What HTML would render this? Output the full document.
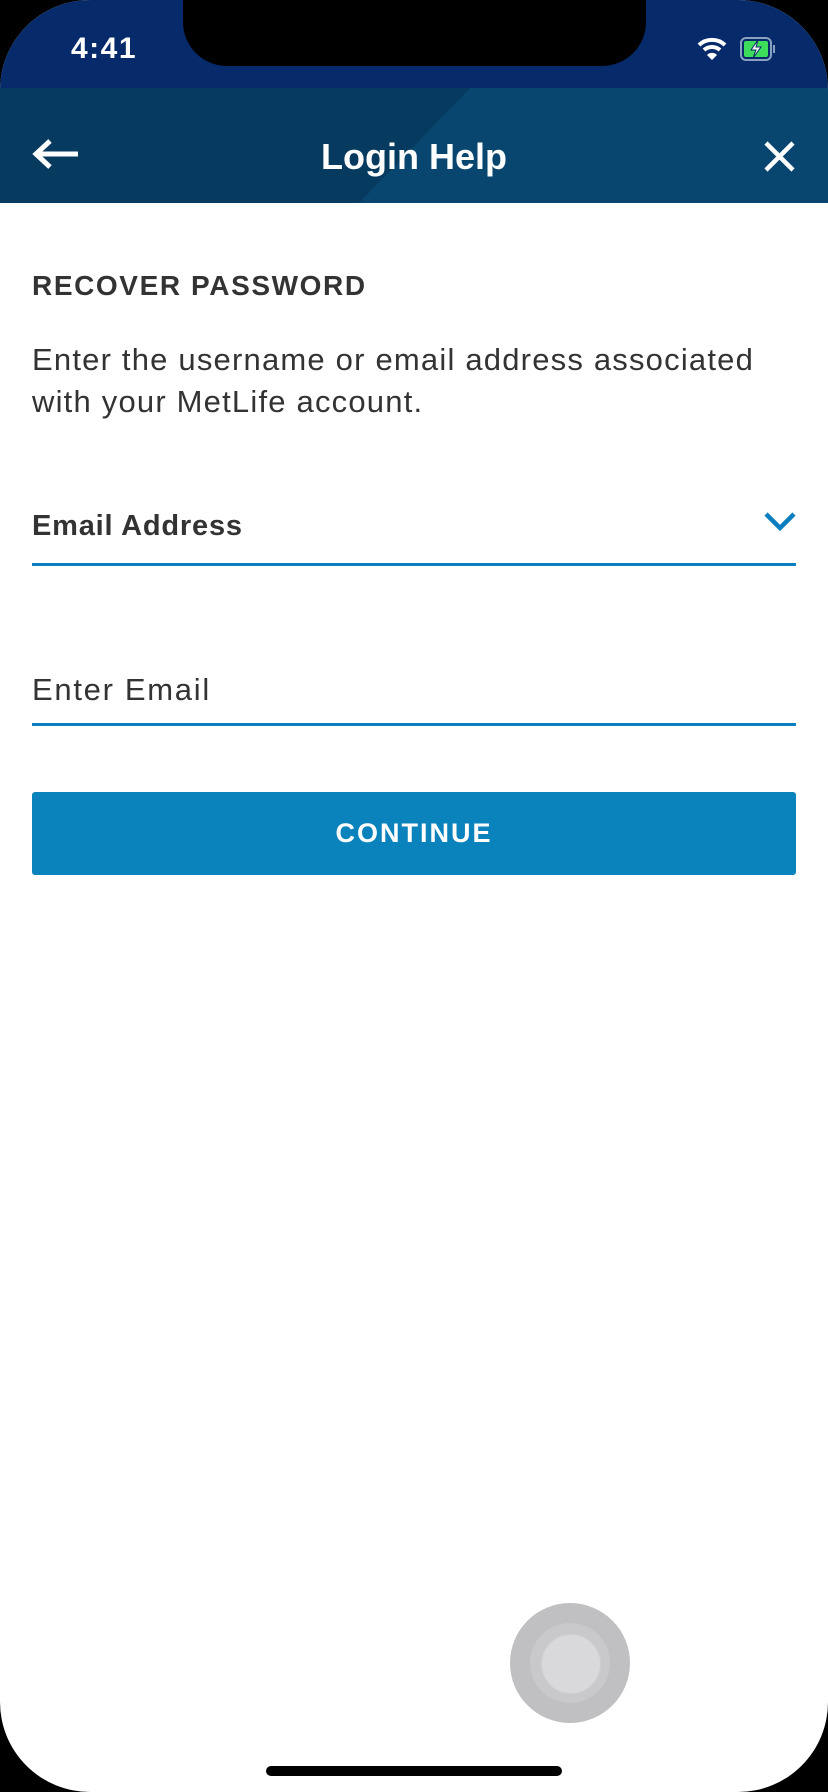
<!DOCTYPE html>
<html><head><meta charset="utf-8"><style>
html,body{margin:0;padding:0;background:#000;}
#s{position:relative;width:828px;height:1792px;background:#fff;border-radius:90px;overflow:hidden;font-family:"Liberation Sans",sans-serif;}
.sb{position:absolute;left:0;top:0;width:828px;height:88px;background:#062a6a;}
.notch{position:absolute;left:183px;top:0;width:463px;height:66px;background:#000;border-radius:0 0 44px 44px;}
.t{position:absolute;color:#fff;}
.h{position:absolute;left:32px;font-size:28px;font-weight:bold;color:#333;letter-spacing:1.6px;}
.p{position:absolute;left:32px;font-size:31px;color:#333;line-height:42px;letter-spacing:1.2px;}
.line{position:absolute;left:32px;width:764px;height:3px;background:#0b7fbf;}
</style></head><body><div id="s">
<div class="sb"></div>
<div class="notch"></div>
<div class="t" style="left:71px;top:32px;font-size:30px;font-weight:bold;letter-spacing:1.5px;">4:41</div>
<svg style="position:absolute;left:697px;top:36px" width="30" height="26" viewBox="0 0 30 26"><path d="M2 9 A19 19 0 0 1 28 9" stroke="#fff" stroke-width="4" fill="none"/><path d="M7 14 A12 12 0 0 1 23 14" stroke="#fff" stroke-width="4" fill="none"/><path d="M15 24 L10 19 A7 7 0 0 1 20 19 Z" fill="#fff"/></svg>
<svg style="position:absolute;left:740px;top:36px" width="36" height="26" viewBox="0 0 36 26"><rect x="1" y="2" width="30" height="22" rx="5" fill="none" stroke="#8aa0c0" stroke-width="2"/><rect x="4" y="5" width="24" height="16" rx="2" fill="#3ddc5a"/><rect x="33" y="9" width="2" height="8" fill="#8aa0c0"/><path d="M18 4 L11 14 L16 14 L13 22 L21 11 L16 11 Z" fill="#fff" stroke="#062a6a" stroke-width="1"/></svg>
<svg style="position:absolute;left:0;top:88px" width="828" height="115"><rect width="828" height="115" fill="#08466f"/><polygon points="0,0 470,0 359,115 0,115" fill="#063a5f"/></svg>
<svg style="position:absolute;left:32px;top:138px" width="48" height="32" viewBox="0 0 48 32"><path d="M46 16 H6 M18 3 L4 16 L18 29" stroke="#fff" stroke-width="5" fill="none"/></svg>
<div class="t" style="left:0;width:828px;text-align:center;top:136px;font-size:36px;font-weight:bold;">Login Help</div>
<svg style="position:absolute;left:763px;top:140px" width="33" height="33" viewBox="0 0 33 33"><path d="M3 3 L30 30 M30 3 L3 30" stroke="#fff" stroke-width="4.5"/></svg>
<div class="h" style="top:270px;">RECOVER PASSWORD</div>
<div class="p" style="top:339px;">Enter the username or email address associated<br>with your MetLife account.</div>
<div class="h" style="top:510px;font-size:29px;letter-spacing:0.8px;">Email Address</div>
<svg style="position:absolute;left:763px;top:510px" width="34" height="22" viewBox="0 0 34 22"><path d="M3 4 L17 18 L31 4" stroke="#0b7fbf" stroke-width="4.5" fill="none"/></svg>
<div class="line" style="top:563px;"></div>
<div class="p" style="top:669px;letter-spacing:1.7px;">Enter Email</div>
<div class="line" style="top:723px;"></div>
<div style="position:absolute;left:32px;top:792px;width:764px;height:83px;background:#0a83bd;border-radius:3px;color:#fff;font-weight:bold;font-size:27px;text-align:center;line-height:83px;letter-spacing:2px;">CONTINUE</div>
<div style="position:absolute;left:510px;top:1603px;width:120px;height:120px;border-radius:50%;background:#c0bfc2;"></div>
<div style="position:absolute;left:530px;top:1623px;width:80px;height:80px;border-radius:50%;background:#c9c8cb;"></div>
<div style="position:absolute;left:541px;top:1634px;width:58px;height:58px;border-radius:50%;background:#d9d9db;border:1px solid #cfcfd1;"></div>
<div style="position:absolute;left:266px;top:1766px;width:296px;height:10px;border-radius:5px;background:#000;"></div>
</div></body></html>
